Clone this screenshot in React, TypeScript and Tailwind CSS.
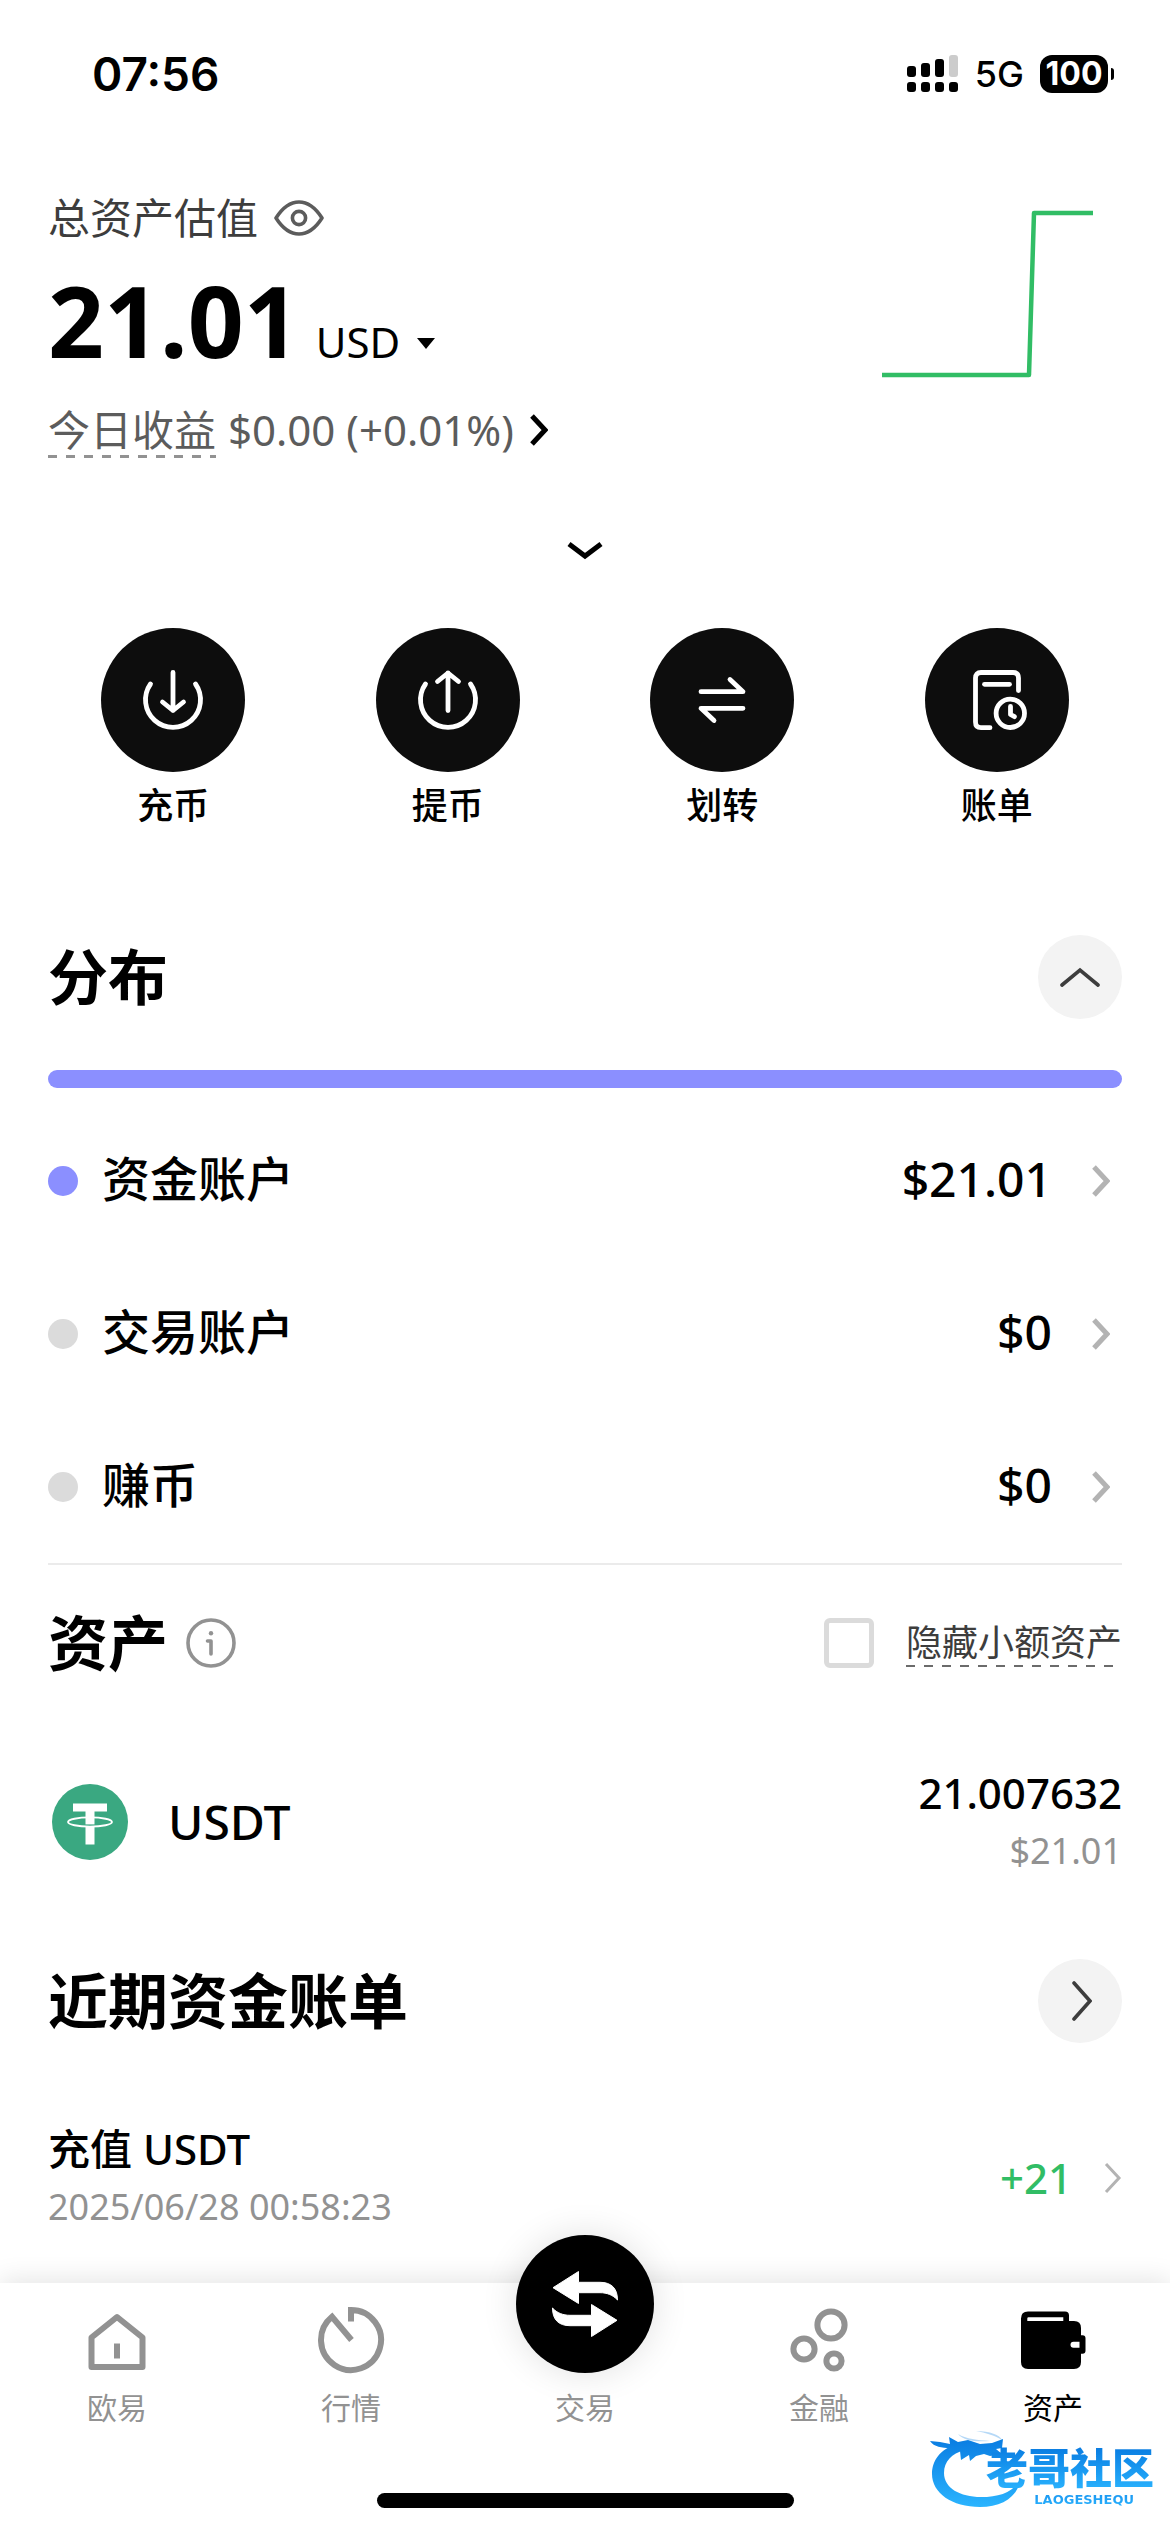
import type { ReactNode } from "react";

const actions = [
  {
    label: "充币",
    icon: (
      <>
        <path d="M13.5 20A27.5 27.5 0 1 0 58.5 20" />
        <path d="M36 8.5V46.5M25.5 38L36 46.5L46.5 38" />
      </>
    ),
  },
  {
    label: "提币",
    icon: (
      <>
        <path d="M13.5 20A27.5 27.5 0 1 0 58.5 20" />
        <path d="M36 46.5V9M25.5 17.5L36 9L46.5 17.5" />
      </>
    ),
  },
  {
    label: "划转",
    icon: <path d="M15 27.7H57L44 15.5M57 44.3H15L28 56.5" />,
  },
  {
    label: "账单",
    icon: (
      <>
        <path d="M29 63.7H20Q14.5 63.7 14.5 58V14Q14.5 8.5 20 8.5H52Q57.5 8.5 57.5 14V26.5" />
        <path d="M23.5 20.3H48.5" />
        <circle cx="49.3" cy="49.3" r="14.2" />
        <path d="M49.5 42.5V50.5L53.5 52.7" />
      </>
    ),
  },
];

const accounts = [
  { name: "资金账户", value: "$21.01", active: true },
  { name: "交易账户", value: "$0", active: false },
  { name: "赚币", value: "$0", active: false },
];

function ChevronRight({ className }: { className: string }) {
  return (
    <svg className={className} viewBox="0 0 18 32" fill="none" stroke="currentColor" aria-hidden="true">
      <path d="M2 2L15 16L2 30" />
    </svg>
  );
}

function StatusBar() {
  return (
    <header className="flex h-37 items-center justify-between pr-14 pl-[92px] font-['Inter',sans-serif]">
      <span className="text-[46px] leading-none font-semibold">07:56</span>
      <div className="flex items-center">
        <svg className="h-[38px] w-[52px]" viewBox="0 0 52 38" aria-hidden="true">
          <rect x="0" y="11" width="9" height="11" rx="3" />
          <rect x="14" y="8" width="9" height="14" rx="3" />
          <rect x="28" y="4" width="9" height="18" rx="3" />
          <rect x="42" y="0" width="9" height="22" rx="3" fill="#ccc" />
          <rect x="0" y="27" width="9" height="10" rx="3" />
          <rect x="14" y="27" width="9" height="10" rx="3" />
          <rect x="28" y="27" width="9" height="10" rx="3" />
          <rect x="42" y="27" width="9" height="10" rx="3" />
        </svg>
        <span className="ml-4 text-[36px] leading-none font-medium">5G</span>
        <div className="ml-4 flex h-[38px] w-[68px] items-center justify-center rounded-xl bg-black text-[32px] leading-none font-bold text-white">
          100
        </div>
        <div className="ml-[3px] h-3 w-[3px] rounded-r-full bg-black" />
      </div>
    </header>
  );
}

function Summary() {
  return (
    <section className="mt-10 flex justify-between px-12">
      <div>
        <div className="flex h-15 items-center gap-4">
          <h1 className="text-[42px] leading-[60px] text-[#3d3d3d]">总资产估值</h1>
          <button type="button" aria-label="隐藏金额">
            <svg className="h-9 w-[50px]" viewBox="0 0 50 36" fill="none" stroke="#5c5c5c" strokeWidth="3.6" strokeLinejoin="round">
              <path d="M2 18C9 7 17 2 25 2S41 7 48 18C41 29 33 34 25 34S9 29 2 18Z" />
              <circle cx="25" cy="18" r="6.6" />
            </svg>
          </button>
        </div>

        <div className="mt-[22px] flex h-[100px] items-baseline">
          <span className="text-[98px] leading-[100px] font-bold">21.01</span>
          <select aria-label="计价货币" className="ml-4 appearance-none bg-transparent text-[42px] leading-[60px]">
            <option>USD</option>
          </select>
          <svg className="ml-4 h-5 w-[18px]" viewBox="0 0 18 20" aria-hidden="true">
            <path d="M0 0H18L9 11Z" />
          </svg>
        </div>

        <div className="mt-[30px] flex h-15 items-center text-[42px] leading-14 text-[#5c5c5c]">
          <span className="bg-[repeating-linear-gradient(90deg,#929292_0_9px,transparent_9px_18px)] bg-[length:100%_3px] bg-bottom bg-no-repeat">
            今日收益
          </span>
          <button type="button" className="flex items-center">
            <span className="ml-3">$0.00 (+0.01%)</span>
            <ChevronRight className="ml-4 h-8 w-[18px] stroke-[5] text-black" />
          </button>
        </div>
      </div>

      <svg className="mt-5 mr-7 h-[175px] w-[212px]" viewBox="0 0 212 175" fill="none" stroke="#31bd65" strokeWidth="4.5" strokeLinejoin="round" aria-hidden="true">
        <path d="M0 167H147L152 5H211" />
      </svg>
    </section>
  );
}

function QuickActions() {
  return (
    <div className="mt-[57px] grid grid-cols-4 px-9">
      {actions.map((action) => (
        <button key={action.label} type="button" className="flex flex-col items-center">
          <span className="flex size-36 items-center justify-center rounded-full bg-[#0d0d0d]">
            <svg className="size-18" viewBox="0 0 72 72" fill="none" stroke="#fff" strokeWidth="4.8" strokeLinecap="round" strokeLinejoin="round">
              {action.icon}
            </svg>
          </span>
          <span className="mt-2.5 text-[36px] leading-12 font-medium">{action.label}</span>
        </button>
      ))}
    </div>
  );
}

function Distribution() {
  return (
    <section className="mt-[105px] px-12">
      <div className="flex items-center justify-between">
        <h2 className="text-[60px] leading-[84px] font-bold">分布</h2>
        <button type="button" aria-label="收起" className="flex size-21 items-center justify-center rounded-full bg-[#f3f3f3]">
          <svg className="h-5 w-10" viewBox="0 0 40 20" fill="none" stroke="#3d3d3d" strokeWidth="3.6" strokeLinecap="round">
            <path d="M2 18L20 3L38 18" />
          </svg>
        </button>
      </div>
      <div className="mt-[51px] h-[18px] rounded-full bg-[#8b8fff]" />

      <ul className="mt-4 border-b-2 border-[#ebebeb]">
        {accounts.map((account) => (
          <li key={account.name}>
            <a href="#" className="flex h-[153px] items-center pr-3 text-[48px] leading-[60px] font-medium">
              <span className={`mr-6 size-[30px] rounded-full ${account.active ? "bg-[#8b8fff]" : "bg-[#dbdbdb]"}`} />
              <span className="flex-1 pb-1">{account.name}</span>
              <span className="pb-1">{account.value}</span>
              <ChevronRight className="ml-10 h-8 w-[18px] stroke-[5] text-[#b3b3b3]" />
            </a>
          </li>
        ))}
      </ul>
    </section>
  );
}

function Assets() {
  return (
    <section className="mt-12 px-12">
      <div className="flex h-15 items-center">
        <h2 className="text-[60px] leading-[60px] font-bold">资产</h2>
        <button type="button" aria-label="说明" className="ml-[18px]">
          <svg className="size-[50px]" viewBox="0 0 50 50" fill="none" stroke="#929292" strokeWidth="3.6" strokeLinecap="round" strokeLinejoin="round">
            <circle cx="25" cy="25" r="23" />
            <path d="M21.5 23H25V36" />
            <circle cx="25" cy="15.3" r="2.2" fill="#929292" stroke="none" />
          </svg>
        </button>
        <label htmlFor="hide-small" className="ml-auto flex items-center gap-8">
          <input id="hide-small" type="checkbox" className="size-[50px] appearance-none rounded-md border-5 border-[#dbdbdb]" />
          <span className="bg-[repeating-linear-gradient(90deg,#6b6b6b_0_9px,transparent_9px_18px)] bg-[length:100%_2px] bg-bottom bg-no-repeat text-[36px] leading-12 text-[#3d3d3d]">
            隐藏小额资产
          </span>
        </label>
      </div>

      <div className="mt-[92px] flex items-center">
        <svg className="ml-1 size-19" viewBox="0 0 76 76" aria-hidden="true">
          <circle cx="38" cy="38" r="38" fill="#3aa881" />
          <path d="M21 19.5H55V27.5H42.5V60.5H33.5V27.5H21Z" fill="#fff" />
          <path d="M33 41.2H43" stroke="#3aa881" strokeWidth="1.6" />
          <ellipse cx="38" cy="38" rx="22" ry="4.6" fill="none" stroke="#fff" strokeWidth="1.8" />
        </svg>
        <span className="ml-10 flex-1 text-[48px] leading-[60px] font-medium">USDT</span>
        <div className="text-right">
          <p className="text-[42px] leading-14 font-medium">21.007632</p>
          <p className="mt-0.5 text-[36px] leading-14 text-[#929292]">$21.01</p>
        </div>
      </div>
    </section>
  );
}

function RecentBills() {
  return (
    <section className="mt-20 px-12">
      <div className="flex items-center justify-between">
        <h2 className="text-[60px] leading-[84px] font-bold">近期资金账单</h2>
        <button type="button" aria-label="查看全部" className="flex size-21 items-center justify-center rounded-full bg-[#f3f3f3] pl-1">
          <svg className="h-10 w-5" viewBox="0 0 20 40" fill="none" stroke="#3d3d3d" strokeWidth="3.6" strokeLinecap="round">
            <path d="M2 2L18 20L2 38" />
          </svg>
        </button>
      </div>
      <a href="#" className="mt-[78px] flex items-center">
        <div className="flex-1">
          <p className="text-[42px] leading-14 font-medium">充值 USDT</p>
          <p className="mt-0.5 text-[36px] leading-14 text-[#929292]">2025/06/28 00:58:23</p>
        </div>
        <span className="text-[42px] leading-14 font-medium text-[#31bd65]">+21</span>
        <ChevronRight className="ml-8 h-8 w-[18px] stroke-[3] text-[#b3b3b3]" />
      </a>
    </section>
  );
}

function NavItem({ label, active, children }: { label: string; active?: boolean; children: ReactNode }) {
  return (
    <a href="#" className={`flex flex-col items-center ${active ? "text-black" : "text-[#929292]"}`}>
      {children}
      <span className="mt-3 text-[30px] leading-10">{label}</span>
    </a>
  );
}

function TabBar() {
  return (
    <footer className="relative bg-white pb-6 shadow-[0_-4px_24px_rgba(0,0,0,0.1)]">
      <nav className="grid grid-cols-5 items-end">
        <NavItem label="欧易">
          <svg className="size-18" viewBox="0 0 72 72" fill="none" stroke="currentColor" strokeWidth="6" strokeLinejoin="round">
            <path d="M36 13L61.5 33.5V63H10.5V33.5Z" />
            <path d="M36 39.5V54.5" />
          </svg>
        </NavItem>
        <NavItem label="行情">
          <svg className="size-18" viewBox="0 0 72 72" fill="none" stroke="currentColor" strokeWidth="6">
            <path d="M36 17.5V6A30 30 0 1 1 17 12.8L36.5 36" />
          </svg>
        </NavItem>
        <NavItem label="交易">
          <span className="-mt-12 mb-[3px] flex size-[138px] items-center justify-center rounded-full bg-black shadow-[0_0_36px_rgba(0,0,0,0.12)]">
            <svg className="size-[66px]" viewBox="0 0 66 66" fill="#fff" stroke="#fff" strokeWidth="1" strokeLinejoin="round">
              <path d="M26.5 11.3H48C59 11.3 65.5 17 65.5 29C61 24 55 21.7 48 21.7H26.5V32.5L1 16.7L26.5 .5Z" />
              <path d="M39.5 54.7H18C7 54.7 .5 49 .5 37C5 42 11 44.3 18 44.3H39.5V33.5L65 49.3L39.5 65.5Z" />
            </svg>
          </span>
        </NavItem>
        <NavItem label="金融">
          <svg className="size-18" viewBox="0 0 72 72" fill="none" stroke="currentColor" strokeWidth="6">
            <circle cx="48" cy="21" r="13.6" />
            <circle cx="21" cy="45" r="10.6" />
            <circle cx="51" cy="57" r="7.6" />
          </svg>
        </NavItem>
        <NavItem label="资产" active>
          <svg className="size-18" viewBox="0 0 72 72" fill="currentColor">
            <path
              fillRule="evenodd"
              d="M11 7.5H48Q52 7.5 52 11.5V17H57Q64 17 64 24V31.3H65.5Q68.5 31.3 68.5 34.3V46.7Q68.5 49.7 65.5 49.7H64V58Q64 65 57 65H11Q4 65 4 58V14.5Q4 7.5 11 7.5ZM11.5 13.3Q10.3 13.3 10.3 14.5V17H46.3V13.3ZM56.5 37.7A3 3 0 0 0 56.5 43.7H62.5V37.7Z"
            />
          </svg>
        </NavItem>
      </nav>
      <div className="mx-auto mt-[65px] h-[15px] w-[417px] rounded-full bg-black" />

      {/* Watermark */}
      <div className="absolute right-4 bottom-6 h-[78px] w-[224px]">
        <svg className="absolute inset-0 h-full w-full" viewBox="0 0 224 78" aria-hidden="true">
          <defs>
            <linearGradient id="dragon" x1="0" y1="0" x2="0" y2="78" gradientUnits="userSpaceOnUse">
              <stop offset="0.15" stopColor="#0b7fe3" />
              <stop offset="1" stopColor="#2bb5ff" />
            </linearGradient>
          </defs>
          <g fill="url(#dragon)">
            <path d="M27 14C10 19 2 31 2 44C2 63 22 77 50 77C72 77 88 67 91 48C84 62 70 67 51 67C30 67 14 58 14 43C14 31 22 24 34 20Z" />
            <path d="M0 11L10 12L20 14L19 7L28 12L38 10L50 14L62 13L73 9L72 18L66 19L72 24L60 26L54 24L46 26L40 31L39 25L31 30L30 21L20 18C12 18 4 17 0 11Z" />
            <path d="M28 4C34 11 46 12 60 11C48 10 36 9 28 4ZM46 1C60 1 70 5 72 10C64 5 56 3 46 1Z" opacity="0.3" />
          </g>
        </svg>
        <div className="absolute right-0 bottom-0 flex flex-col items-end">
          <span className="bg-linear-to-b from-[#0878df] to-[#2bb5ff] bg-clip-text text-[42px] leading-[48px] font-black text-transparent">
            老哥社区
          </span>
          <span className="mr-5 bg-linear-to-b from-[#1a93ef] to-[#2bb5ff] bg-clip-text font-['DejaVu_Sans',sans-serif] text-[13px] leading-[16px] font-bold text-transparent">
            LAOGESHEQU
          </span>
        </div>
      </div>
    </footer>
  );
}

export default function App() {
  return (
    <div className="flex min-h-screen flex-col bg-white font-['Noto_Sans','Noto_Sans_CJK_SC',sans-serif] text-black">
      <StatusBar />
      <main className="flex-1 pb-10">
        <Summary />
        <button type="button" aria-label="展开" className="mx-auto mt-[71px] flex h-10 w-20 items-center justify-center">
          <svg className="h-5 w-9" viewBox="0 0 36 20" fill="none" stroke="#000" strokeWidth="5">
            <path d="M2 3L18 15L34 3" />
          </svg>
        </button>
        <QuickActions />
        <Distribution />
        <Assets />
        <RecentBills />
      </main>
      <TabBar />
    </div>
  );
}
